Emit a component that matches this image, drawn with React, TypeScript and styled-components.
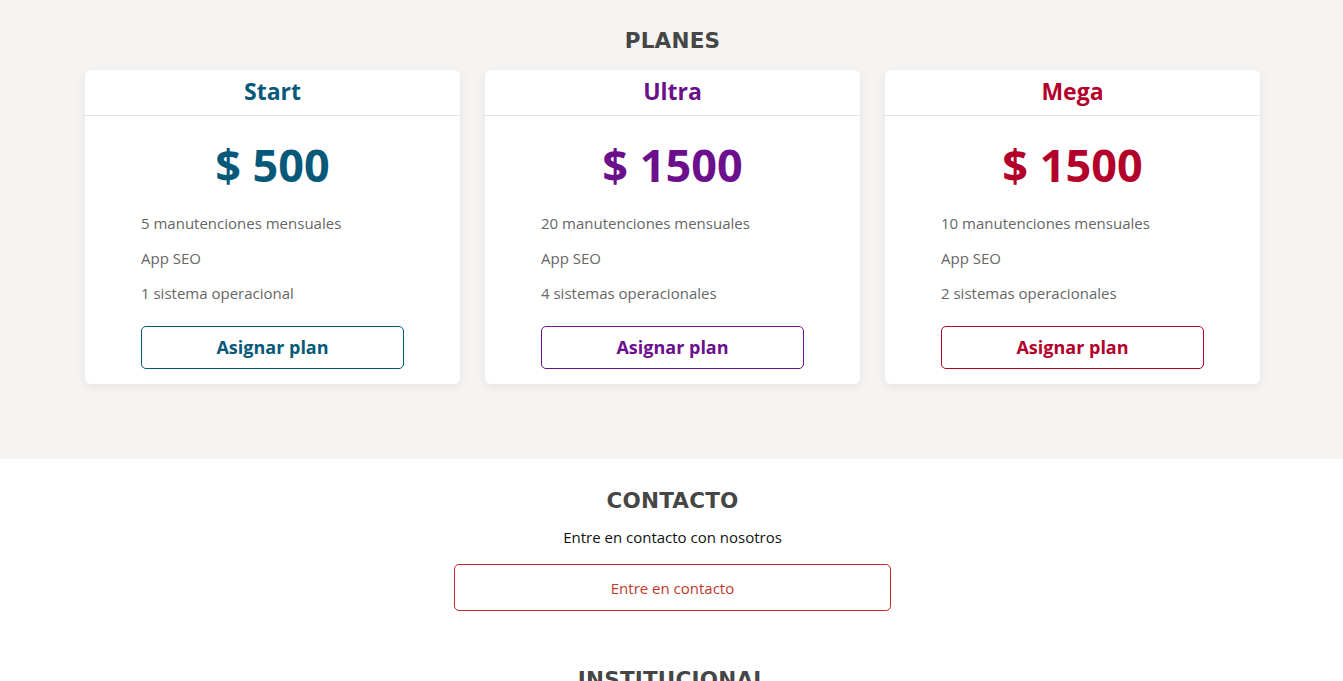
import React from "react";
import styled, { createGlobalStyle } from "styled-components";

const GlobalStyle = createGlobalStyle`
  * { box-sizing: border-box; }
  body {
    margin: 0;
    padding-left: 2px;
    font-family: "Open Sans", "Liberation Sans", sans-serif;
    background: #ffffff;
  }
`;

const PlansSection = styled.section`
  background: #f5f4f2;
  margin-left: -2px;
  padding: 28px 0 75px 2px;
  display: flex;
  flex-direction: column;
  align-items: center;
`;

const SectionTitle = styled.h2`
  margin: 0;
  font-family: "DejaVu Sans", "Liberation Sans", sans-serif;
  font-weight: 700;
  font-size: 21.5px;
  line-height: 26px;
  color: #464646;
  text-align: center;
  letter-spacing: 0.2px;
`;

const CardsRow = styled.div`
  margin-top: 16px;
  display: grid;
  grid-template-columns: repeat(3, 375px);
  gap: 25px;
`;

const Card = styled.div`
  background: #ffffff;
  border-radius: 6px;
  box-shadow: 0 2px 12px rgba(0, 0, 0, 0.07);
  display: flex;
  flex-direction: column;
`;

const CardHeader = styled.div<{ $color: string }>`
  height: 46px;
  padding-top: 5px;
  border-bottom: 1px solid #e7e4ee;
  text-align: center;
  font-size: 23px;
  line-height: 32px;
  font-weight: 700;
  color: ${(p) => p.$color};
`;

const CardBody = styled.div`
  padding: 21px 56px 15px;
  display: flex;
  flex-direction: column;
`;

const Price = styled.div<{ $color: string }>`
  text-align: center;
  font-size: 45px;
  font-weight: 700;
  line-height: 56px;
  color: ${(p) => p.$color};
`;

const Features = styled.ul`
  list-style: none;
  margin: 13px 0 0;
  padding: 0;
`;

const Feature = styled.li`
  font-size: 15px;
  line-height: 35px;
  color: #666666;
`;

const AssignButton = styled.button<{ $color: string }>`
  margin-top: 15px;
  height: 43px;
  width: 100%;
  padding: 0 0 2px;
  background: #ffffff;
  border: 1px solid ${(p) => p.$color};
  border-radius: 5px;
  color: ${(p) => p.$color};
  font-family: "Open Sans", "Liberation Sans", sans-serif;
  font-size: 18px;
  font-weight: 700;
  cursor: pointer;
`;

const ContactSection = styled.section`
  background: #ffffff;
  padding: 29px 0 28px;
  display: flex;
  flex-direction: column;
  align-items: center;
`;

const ContactText = styled.p`
  margin: 13px 0 0;
  font-size: 15px;
  line-height: 21px;
  color: #111111;
`;

const ContactButton = styled.button`
  margin-top: 16px;
  width: 437px;
  height: 47px;
  background: #ffffff;
  border: 1px solid #c9252d;
  border-radius: 5px;
  color: #c0392b;
  font-family: "Open Sans", "Liberation Sans", sans-serif;
  font-size: 15px;
  cursor: pointer;
`;

const InstitutionalSection = styled.section`
  background: #ffffff;
  padding: 28px 0 40px;
  display: flex;
  justify-content: center;
`;

const plans = [
  {
    name: "Start",
    price: "$ 500",
    color: "#07597a",
    features: ["5 manutenciones mensuales", "App SEO", "1 sistema operacional"],
  },
  {
    name: "Ultra",
    price: "$ 1500",
    color: "#6b0f8c",
    features: ["20 manutenciones mensuales", "App SEO", "4 sistemas operacionales"],
  },
  {
    name: "Mega",
    price: "$ 1500",
    color: "#b3002b",
    features: ["10 manutenciones mensuales", "App SEO", "2 sistemas operacionales"],
  },
];

export default function App() {
  return (
    <>
      <GlobalStyle />
      <PlansSection>
        <SectionTitle>PLANES</SectionTitle>
        <CardsRow>
          {plans.map((p) => (
            <Card key={p.name}>
              <CardHeader $color={p.color}>{p.name}</CardHeader>
              <CardBody>
                <Price $color={p.color}>{p.price}</Price>
                <Features>
                  {p.features.map((f) => (
                    <Feature key={f}>{f}</Feature>
                  ))}
                </Features>
                <AssignButton $color={p.color}>Asignar plan</AssignButton>
              </CardBody>
            </Card>
          ))}
        </CardsRow>
      </PlansSection>
      <ContactSection>
        <SectionTitle>CONTACTO</SectionTitle>
        <ContactText>Entre en contacto con nosotros</ContactText>
        <ContactButton>Entre en contacto</ContactButton>
      </ContactSection>
      <InstitutionalSection>
        <SectionTitle>INSTITUCIONAL</SectionTitle>
      </InstitutionalSection>
    </>
  );
}
